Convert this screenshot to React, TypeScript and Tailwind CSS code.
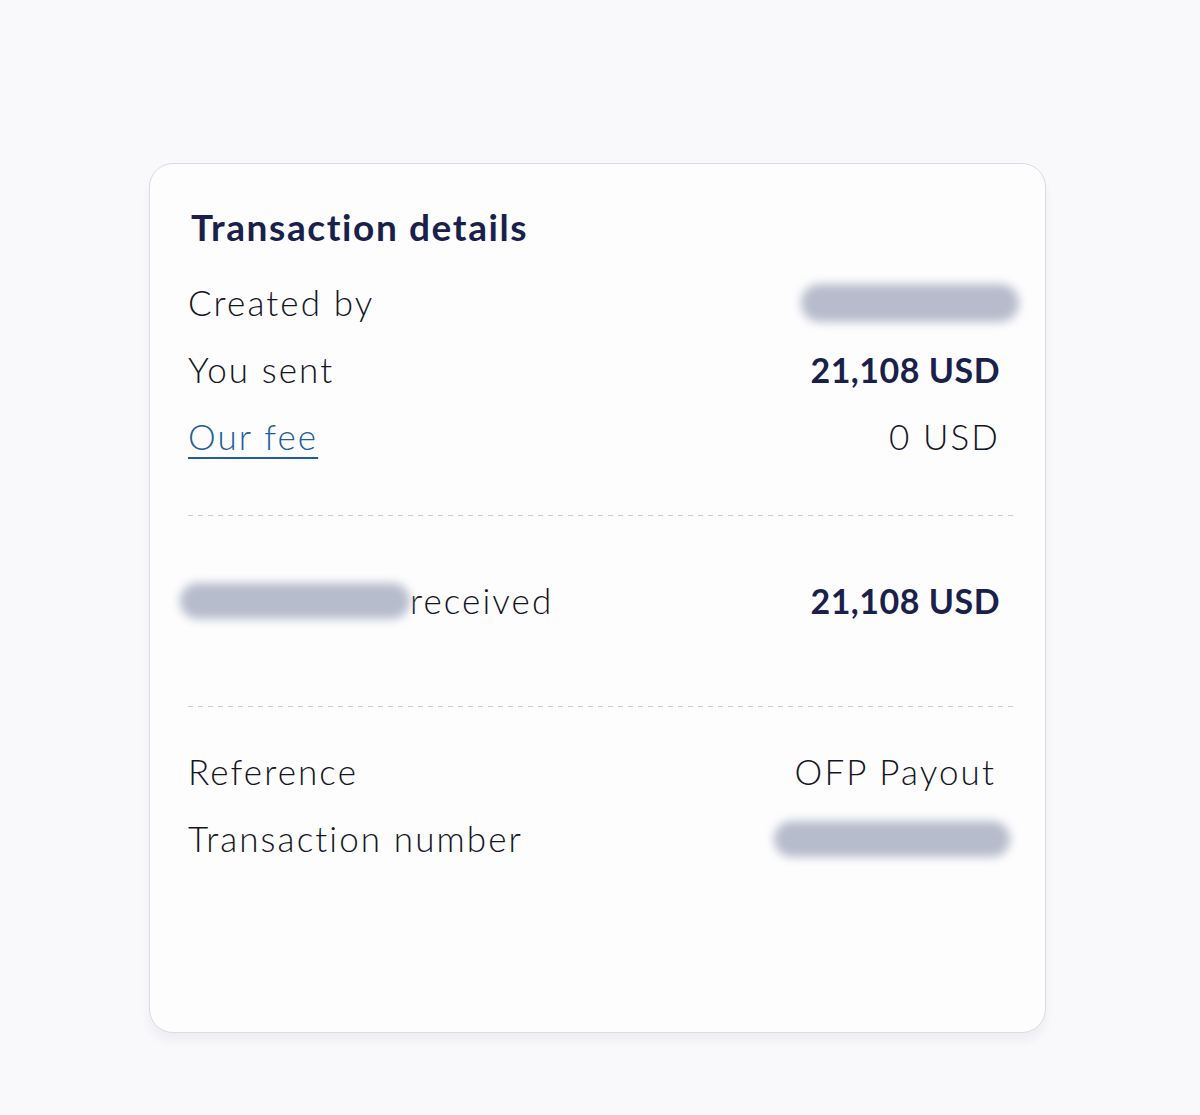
import React from "react";

const Blur: React.FC<{ className: string }> = ({ className }) => (
  <div className={`rounded-full bg-[#b7bccc] blur-[5px] ${className}`} />
);

const Dashed: React.FC<{ className?: string }> = ({ className = "" }) => (
  <div
    className={`h-px w-full bg-[linear-gradient(to_right,#c8cad5_50%,transparent_0)] bg-[length:10px_1px] ${className}`}
  />
);

const Row: React.FC<{ left: React.ReactNode; right: React.ReactNode }> = ({ left, right }) => (
  <div className="flex h-[67px] items-center justify-between pr-[15px]">
    <div className="flex items-center">{left}</div>
    <div className="flex items-center">{right}</div>
  </div>
);

const App: React.FC = () => {
  return (
    <div className="min-h-[1115px] w-full bg-[#f9f9fc] pt-[163px] font-['Lato',_'Noto_Sans',_sans-serif]">
      <div className="ml-[149px] h-[870px] w-[897px] rounded-[24px] border border-[#d9dbe5] bg-[#fdfdfe] pl-[38px] pr-[30px] pt-[39px] shadow-[0_8px_10px_rgba(30,35,80,0.05)]">
        <h2 className="ml-[3px] h-[48px] text-[37px] font-bold leading-[48px] tracking-[1.6px] text-[#1a1f4b]">
          Transaction details
        </h2>
        <div className="mt-[18px] text-[35px] font-light tracking-[2.1px] text-[#14151f]">
          <Row
            left={<span>Created by</span>}
            right={<Blur className="-mr-[19px] h-[38px] w-[218px]" />}
          />
          <Row
            left={<span>You sent</span>}
            right={<span className="text-[34px] font-bold tracking-[0.5px] text-[#1a1f4b]">21,108 USD</span>}
          />
          <Row
            left={
              <a href="#" className="text-[#1f5d9c] underline decoration-[2px] underline-offset-[7px]">
                Our fee
              </a>
            }
            right={<span>0 USD</span>}
          />
          <Dashed className="mt-[45px]" />
          <div className="mt-[51px]">
            <Row
              left={
                <>
                  <Blur className="-ml-[8px] h-[36px] w-[230px]" />
                  <span>received</span>
                </>
              }
              right={<span className="text-[34px] font-bold tracking-[0.5px] text-[#1a1f4b]">21,108 USD</span>}
            />
          </div>
          <Dashed className="mt-[72px]" />
          <div className="mt-[31px]">
            <Row left={<span>Reference</span>} right={<span className="mr-[4px]">OFP Payout</span>} />
            <Row
              left={<span>Transaction number</span>}
              right={<Blur className="-mr-[10px] h-[36px] w-[236px]" />}
            />
          </div>
        </div>
      </div>
    </div>
  );
};

export default App;
